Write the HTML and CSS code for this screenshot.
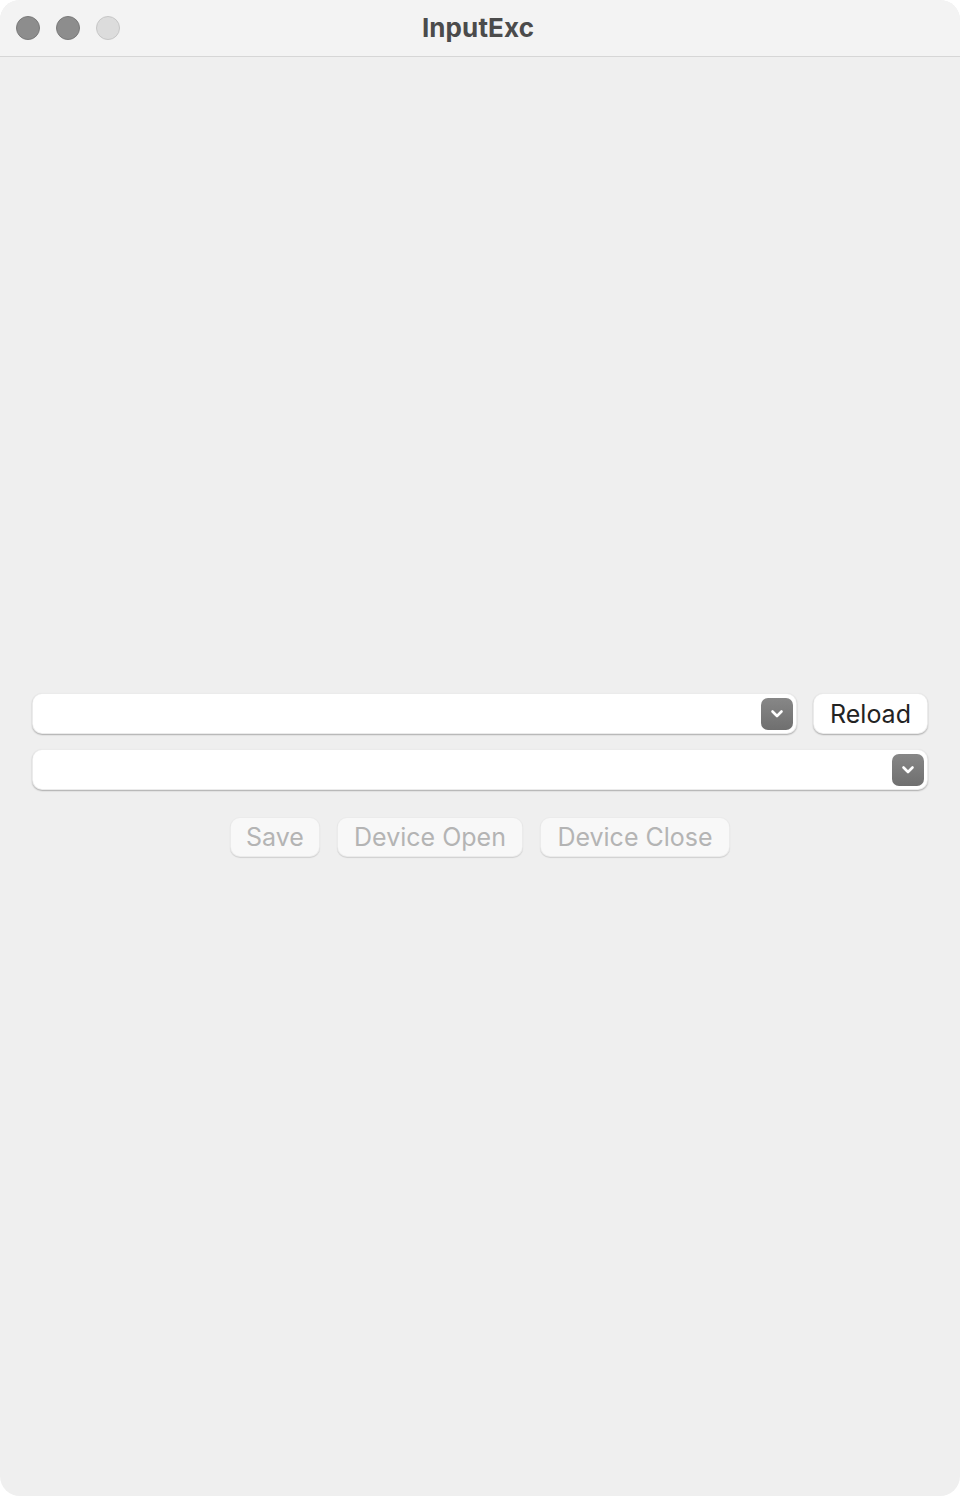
FILE: index.html
```html
<!DOCTYPE html>
<html>
<head>
<meta charset="utf-8">
<link rel="stylesheet" href="styles.css">
</head>
<body>
<div class="window">
  <div class="titlebar">
    <div class="lights">
      <span class="light dark"></span>
      <span class="light dark"></span>
      <span class="light pale"></span>
    </div>
    <div class="title">InputExc</div>
  </div>
  <div class="content">
    <div class="row">
      <div class="popup grow">
        <span class="arrow"><svg width="16" height="12" viewBox="0 0 16 12"><path d="M3.5 3.5 L8 8 L12.5 3.5" fill="none" stroke="#fff" stroke-width="2.6" stroke-linecap="round" stroke-linejoin="round"/></svg></span>
      </div>
      <button class="btn reload">Reload</button>
    </div>
    <div class="row">
      <div class="popup grow">
        <span class="arrow"><svg width="16" height="12" viewBox="0 0 16 12"><path d="M3.5 3.5 L8 8 L12.5 3.5" fill="none" stroke="#fff" stroke-width="2.6" stroke-linecap="round" stroke-linejoin="round"/></svg></span>
      </div>
    </div>
    <div class="actions">
      <button class="btn disabled save">Save</button>
      <button class="btn disabled open">Device Open</button>
      <button class="btn disabled close">Device Close</button>
    </div>
  </div>
</div>
</body>
</html>
```

FILE: styles.css
```css
* { box-sizing: border-box; }
html, body { margin: 0; padding: 0; background: #ffffff; }
body { font-family: Inter, "Noto Sans", "Liberation Sans", sans-serif; }

.window {
  width: 960px;
  height: 1496px;
  border-radius: 20px;
  overflow: hidden;
  background: #efefef;
  display: flex;
  flex-direction: column;
}

.titlebar {
  height: 57px;
  flex: none;
  background: #f3f3f3;
  border-bottom: 1px solid #d6d6d6;
  position: relative;
  display: flex;
  align-items: center;
  justify-content: center;
}

.lights {
  position: absolute;
  left: 16px;
  top: 16px;
  display: flex;
  gap: 16px;
}

.light {
  width: 24px;
  height: 24px;
  border-radius: 50%;
  display: block;
}
.light.dark { background: #8d8d8d; border: 1px solid #7a7a7a; }
.light.pale { background: #dcdcdc; border: 1px solid #c6c6c6; }

.title {
  font-size: 26px;
  font-weight: 700;
  color: #4b4b4b;
  margin-left: -4px;
  margin-top: -2px;
  letter-spacing: 0.1px;
}

.content {
  flex: 1;
  padding: 636px 32px 0 32px;
  display: flex;
  flex-direction: column;
}

.row {
  display: flex;
  gap: 16px;
  height: 41px;
  margin-bottom: 15px;
}

.grow { flex: 1; }

.popup {
  height: 41px;
  background: #ffffff;
  border-radius: 10px;
  border: 1px solid rgba(0,0,0,0.08);
  box-shadow: 0 1px 1.5px rgba(0,0,0,0.28);
  display: flex;
  align-items: center;
  justify-content: flex-end;
  padding-right: 3px;
}

.arrow {
  width: 32px;
  height: 32px;
  border-radius: 7px;
  background: linear-gradient(#878787, #6f6f6f);
  display: flex;
  align-items: center;
  justify-content: center;
}

.btn {
  font-family: inherit;
  height: 41px;
  border-radius: 10px;
  background: #ffffff;
  border: 1px solid rgba(0,0,0,0.08);
  box-shadow: 0 1px 1.5px rgba(0,0,0,0.28);
  font-size: 25px;
  color: #232323;
  padding: 0;
  display: flex;
  align-items: center;
  justify-content: center;
}

.reload { width: 115px; }

.actions {
  display: flex;
  justify-content: center;
  gap: 17px;
  margin-top: 12px;
}

.btn.disabled {
  height: 40px;
  background: #f8f8f8;
  color: #b4b4b4;
  border: 1px solid rgba(0,0,0,0.05);
  box-shadow: 0 1px 1px rgba(0,0,0,0.13);
}

.save { width: 90px; }
.open { width: 186px; }
.close { width: 190px; }
```
